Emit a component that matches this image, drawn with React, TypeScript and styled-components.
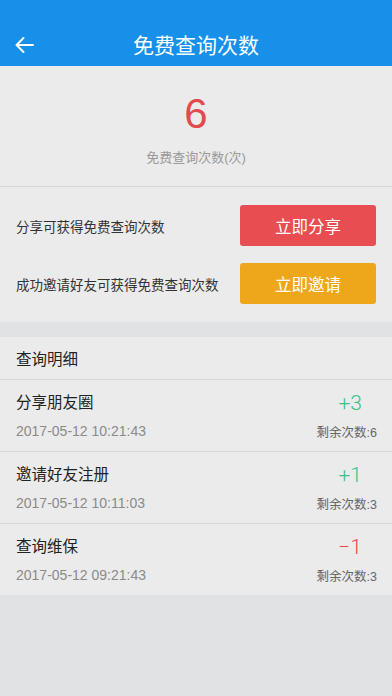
import styled, { createGlobalStyle } from "styled-components";

const GlobalStyle = createGlobalStyle`
  html, body {
    margin: 0;
    padding: 0;
    background: #e1e2e4;
  }
  body {
    font-family: "Liberation Sans", "Noto Sans CJK SC", sans-serif;
    color: #333;
  }
`;

type Record = {
  title: string;
  time: string;
  delta: number;
  left: number;
};

const records: Record[] = [
  { title: "分享朋友圈", time: "2017-05-12 10:21:43", delta: 3, left: 6 },
  { title: "邀请好友注册", time: "2017-05-12 10:11:03", delta: 1, left: 3 },
  { title: "查询维保", time: "2017-05-12 09:21:43", delta: -1, left: 3 },
];

function BackArrow() {
  return (
    <svg width="20" height="18" viewBox="0 0 20 18" fill="none">
      <path d="M19 9H2.5M9.5 2L2.5 9L9.5 16" stroke="#fff" strokeWidth="2" strokeLinecap="round" strokeLinejoin="round" />
    </svg>
  );
}

export default function App() {
  return (
    <Page>
      <GlobalStyle />
      <Header>
        <BackButton>
          <BackArrow />
        </BackButton>
        <Title>免费查询次数</Title>
      </Header>

      <CountBox>
        <Count>6</Count>
        <CountLabel>免费查询次数(次)</CountLabel>
      </CountBox>

      <Actions>
        <ActionRow>
          <ActionText>分享可获得免费查询次数</ActionText>
          <ActionButton $color="#e84d51">立即分享</ActionButton>
        </ActionRow>
        <ActionRow>
          <ActionText>成功邀请好友可获得免费查询次数</ActionText>
          <ActionButton $color="#eea71b">立即邀请</ActionButton>
        </ActionRow>
      </Actions>

      <Details>
        <DetailsHead>查询明细</DetailsHead>
        {records.map((r) => (
          <Item key={r.time}>
            <ItemLeft>
              <ItemTitle>{r.title}</ItemTitle>
              <ItemTime>{r.time}</ItemTime>
            </ItemLeft>
            <ItemRight>
              <Delta $positive={r.delta > 0}>
                {r.delta > 0 ? `+${r.delta}` : `\u2212${Math.abs(r.delta)}`}
              </Delta>
              <Left>剩余次数:{r.left}</Left>
            </ItemRight>
          </Item>
        ))}
      </Details>
    </Page>
  );
}

const Page = styled.div`
  width: 392px;
  min-height: 696px;
  background: #e1e2e4;
`;

const Header = styled.header`
  position: relative;
  height: 44px;
  padding-top: 22px;
  background: #1790ea;
  display: flex;
  align-items: center;
  justify-content: center;
`;

const BackButton = styled.div`
  position: absolute;
  left: 14px;
  top: 36px;
  display: flex;
`;

const Title = styled.h1`
  margin: 0;
  font-size: 21px;
  font-weight: 400;
  color: #fff;
`;

const CountBox = styled.section`
  height: 121px;
  background: #ebebeb;
  border-bottom: 1px solid #d6d6d6;
  display: flex;
  flex-direction: column;
  align-items: center;
  padding-top: 25px;
  box-sizing: border-box;
`;

const Count = styled.div`
  font-size: 42px;
  line-height: 46px;
  color: #e24a4c;
`;

const CountLabel = styled.div`
  margin-top: 13px;
  font-size: 13px;
  line-height: 16px;
  color: #9a9a9a;
`;

const Actions = styled.section`
  background: #ebebeb;
  padding: 18px 16px 18px;
  display: flex;
  flex-direction: column;
  gap: 17px;
`;

const ActionRow = styled.div`
  display: flex;
  align-items: center;
  justify-content: space-between;
`;

const ActionText = styled.span`
  font-size: 13.5px;
  color: #333;
`;

const ActionButton = styled.button<{ $color: string }>`
  width: 136px;
  height: 41px;
  border: none;
  border-radius: 3px;
  background: ${(p) => p.$color};
  color: #fff;
  font-family: inherit;
  font-size: 16.5px;
  padding: 0;
`;

const Details = styled.section`
  margin-top: 15px;
  background: #ebebeb;
`;

const DetailsHead = styled.div`
  height: 42px;
  padding: 0 16px;
  display: flex;
  align-items: center;
  font-size: 15.5px;
  color: #222;
  border-bottom: 1px solid #d6d6d6;
`;

const Item = styled.div`
  height: 71px;
  padding: 0 15px 0 16px;
  display: flex;
  justify-content: space-between;
  border-bottom: 1px solid #d6d6d6;

  &:last-child {
    border-bottom: none;
  }
`;

const ItemLeft = styled.div`
  display: flex;
  flex-direction: column;
  padding-top: 13px;
`;

const ItemTitle = styled.div`
  font-size: 15.5px;
  line-height: 20px;
  color: #222;
`;

const ItemTime = styled.div`
  margin-top: 9px;
  font-size: 14px;
  line-height: 18px;
  color: #8a8a8a;
`;

const ItemRight = styled.div`
  display: flex;
  flex-direction: column;
  align-items: flex-end;
  padding-top: 11px;
`;

const Delta = styled.div<{ $positive: boolean }>`
  font-family: Roboto, "Liberation Sans", sans-serif;
  font-weight: 300;
  font-size: 21px;
  line-height: 24px;
  margin-right: 15px;
  color: ${(p) => (p.$positive ? "#3dbf87" : "#e5474b")};
`;

const Left = styled.div`
  margin-top: 10px;
  font-size: 12.5px;
  line-height: 16px;
  color: #666;
`;
